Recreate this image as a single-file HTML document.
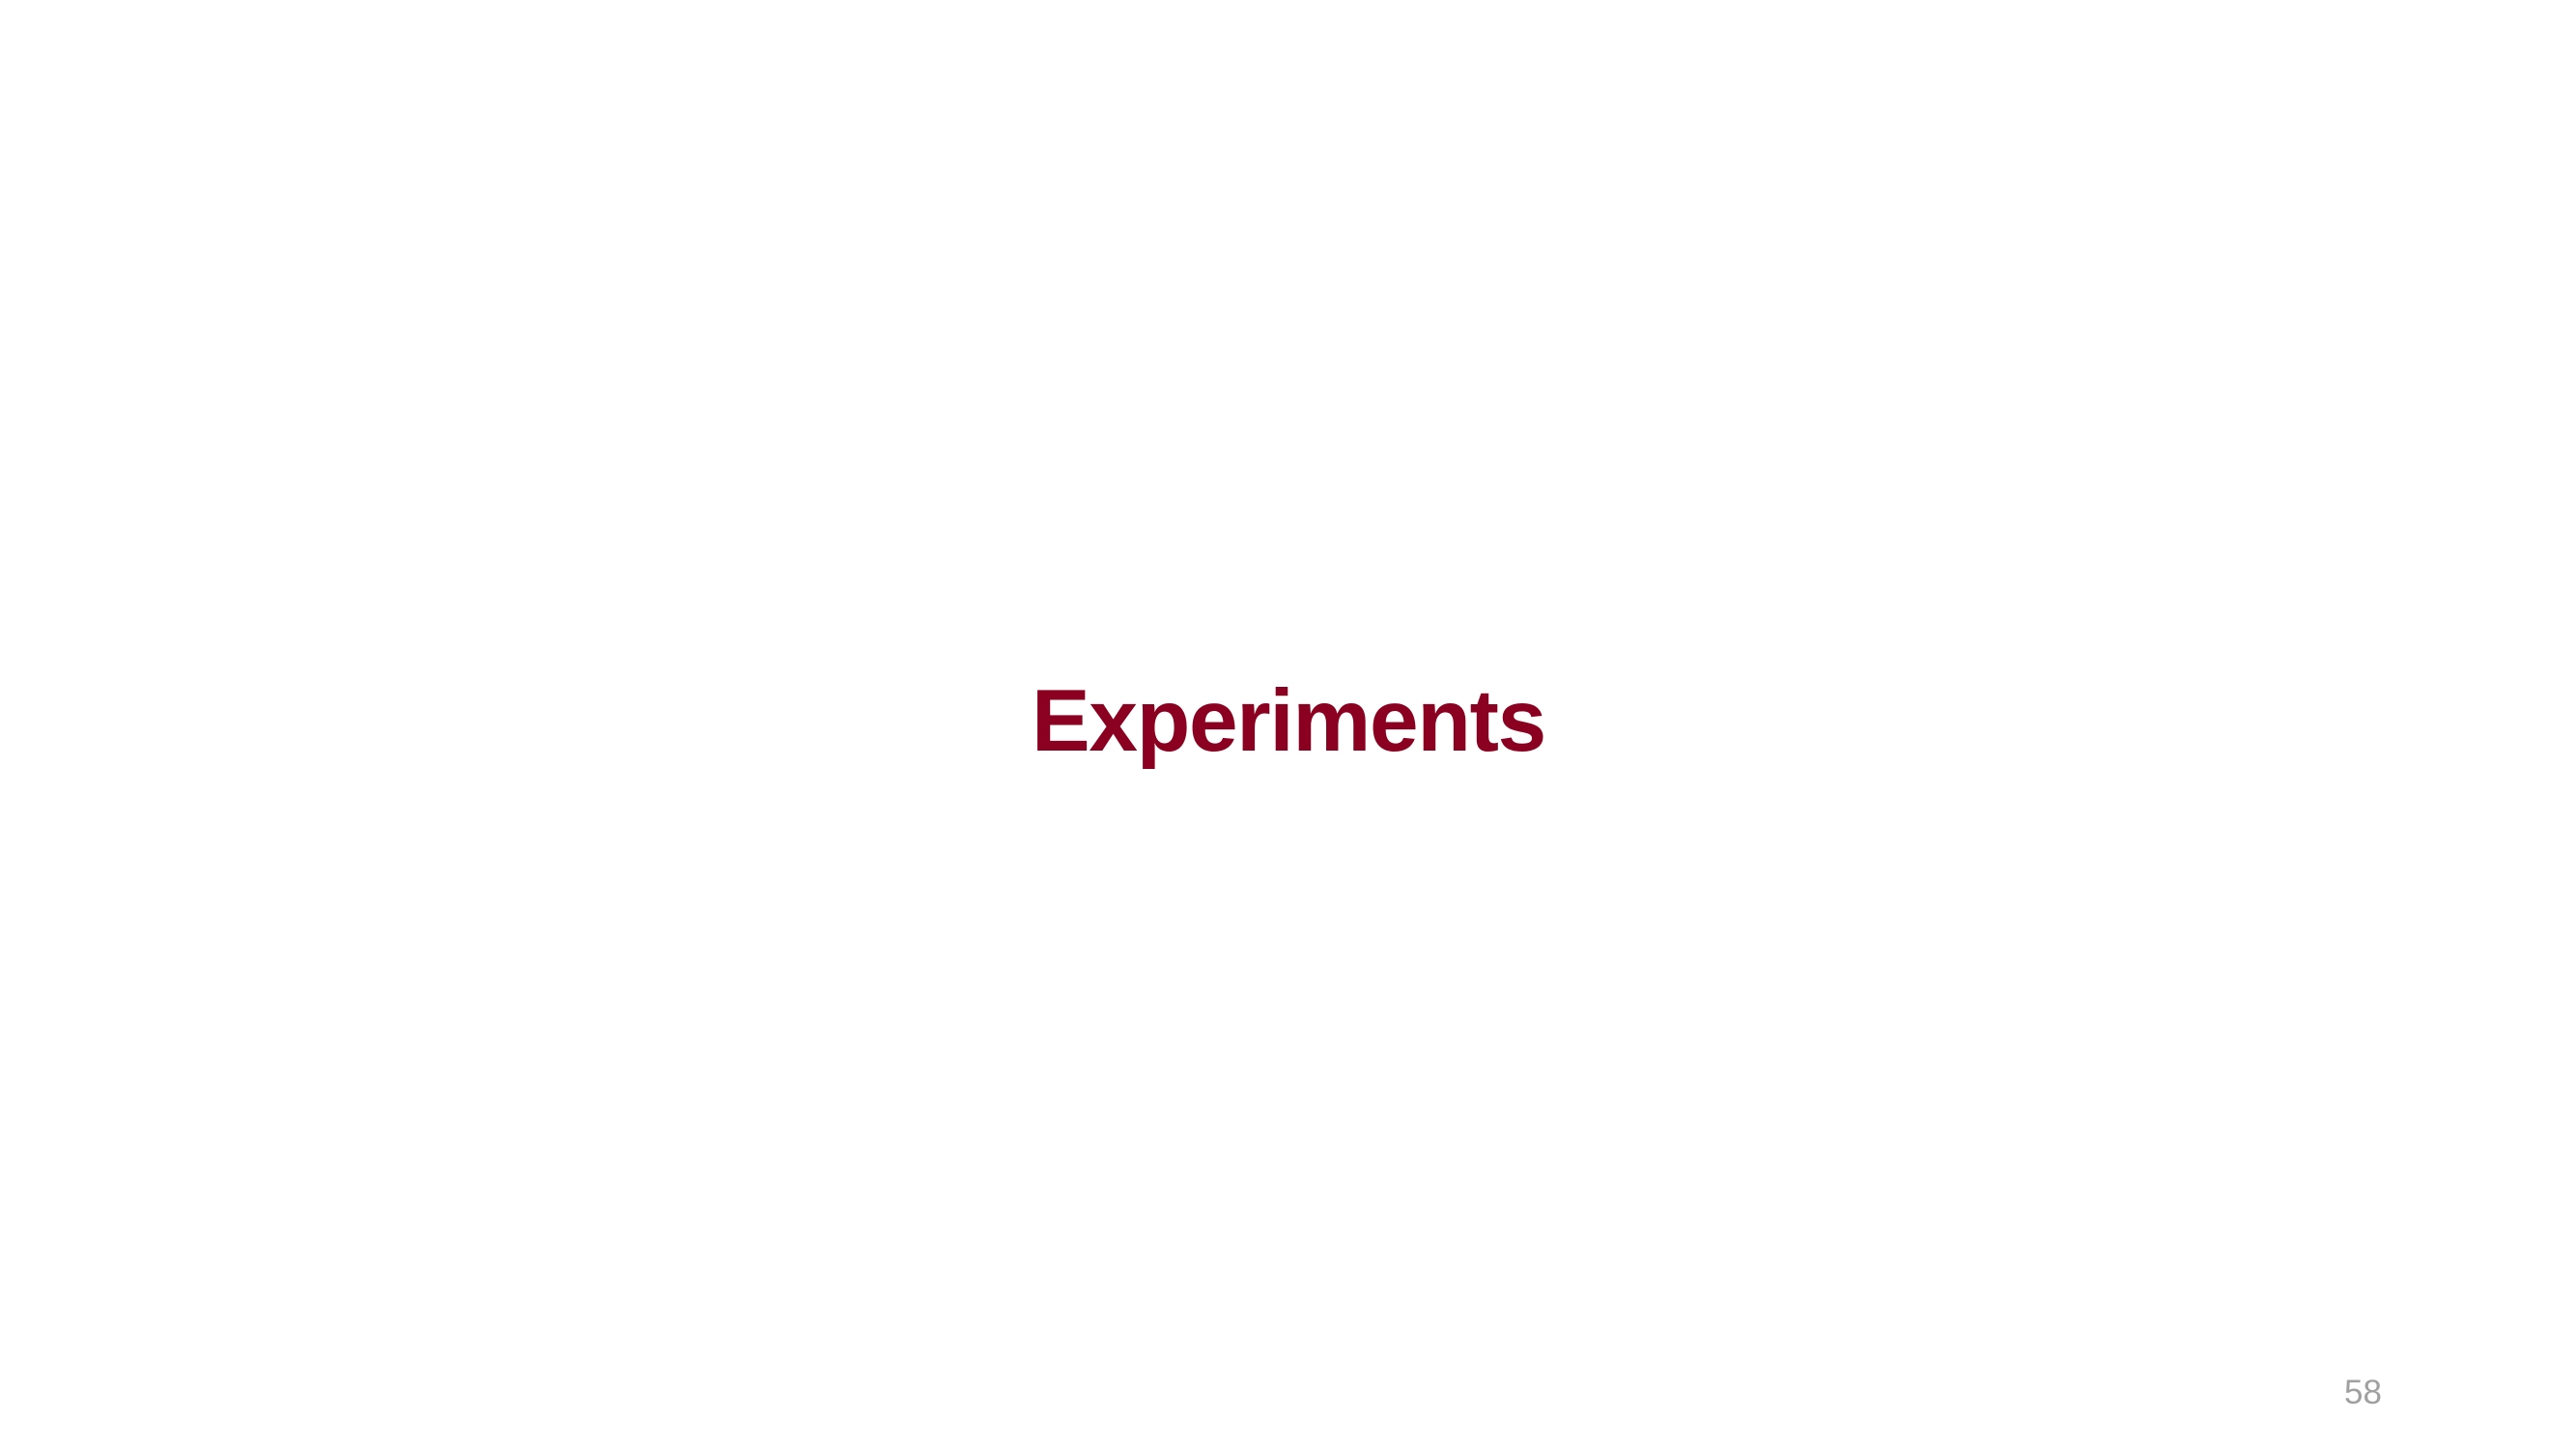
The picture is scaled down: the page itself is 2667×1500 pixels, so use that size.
<!DOCTYPE html>
<html><head><style>
html,body{margin:0;padding:0;width:2667px;height:1500px;background:#fff;overflow:hidden;position:relative}
.t{position:absolute;left:1068px;top:701px;font:bold 91px/1 "Liberation Sans",sans-serif;color:#8b0020;white-space:nowrap;letter-spacing:-1.3px}
.n{position:absolute;left:2427px;top:1424px;font:35px/1 "Liberation Sans",sans-serif;color:#a0a0a0}
</style></head><body>
<div class="t">Experiments</div>
<div class="n">58</div>
</body></html>
